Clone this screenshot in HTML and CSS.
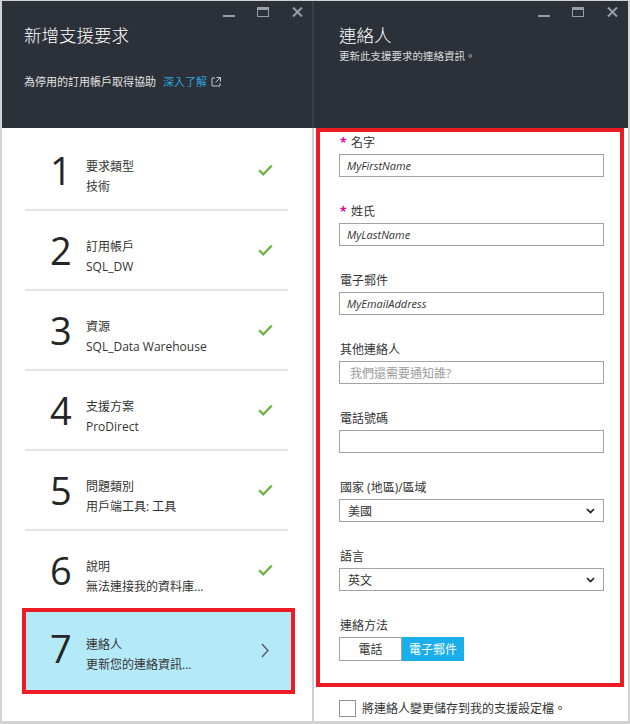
FILE: index.html
```html
<!DOCTYPE html>
<html lang="zh-Hant">
<head>
<meta charset="utf-8">
<title>新增支援要求</title>
<link rel="stylesheet" href="styles.css">
</head>
<body>
<div class="portal">
  <section class="blade blade-steps">
    <header class="blade-header">
      <div class="win-controls">
        <span class="ctl-min"></span>
        <span class="ctl-max"></span>
        <svg class="ctl-close" width="11" height="10" viewBox="0 0 11 10"><path d="M1 0.5L10 9.5M10 0.5L1 9.5" stroke="#9a9ea4" stroke-width="2" fill="none"/></svg>
      </div>
      <h1 class="blade-title">新增支援要求</h1>
      <p class="blade-note">為停用的訂用帳戶取得協助<a class="link">深入了解</a><svg class="ext" width="10" height="10" viewBox="0 0 10 10"><path d="M4 1H1v8h8V6" stroke="#c4c7cc" stroke-width="1" fill="none"/><path d="M5.5 0.5h4v4M9.5 0.5L4.5 5.5" stroke="#c4c7cc" stroke-width="1" fill="none"/></svg></p>
    </header>
    <ol class="steps">
      <li class="step">
        <span class="step-num">1</span>
        <div class="step-text"><div>要求類型</div><div>技術</div></div>
        <svg class="check" width="15" height="12" viewBox="0 0 15 12"><polyline points="1.2,6.2 5.3,10.3 13.8,1.5" fill="none" stroke="#6cb33f" stroke-width="2.3"/></svg>
      </li>
      <li class="step">
        <span class="step-num">2</span>
        <div class="step-text"><div>訂用帳戶</div><div>SQL_DW</div></div>
        <svg class="check" width="15" height="12" viewBox="0 0 15 12"><polyline points="1.2,6.2 5.3,10.3 13.8,1.5" fill="none" stroke="#6cb33f" stroke-width="2.3"/></svg>
      </li>
      <li class="step">
        <span class="step-num">3</span>
        <div class="step-text"><div>資源</div><div>SQL_Data Warehouse</div></div>
        <svg class="check" width="15" height="12" viewBox="0 0 15 12"><polyline points="1.2,6.2 5.3,10.3 13.8,1.5" fill="none" stroke="#6cb33f" stroke-width="2.3"/></svg>
      </li>
      <li class="step">
        <span class="step-num">4</span>
        <div class="step-text"><div>支援方案</div><div>ProDirect</div></div>
        <svg class="check" width="15" height="12" viewBox="0 0 15 12"><polyline points="1.2,6.2 5.3,10.3 13.8,1.5" fill="none" stroke="#6cb33f" stroke-width="2.3"/></svg>
      </li>
      <li class="step">
        <span class="step-num">5</span>
        <div class="step-text"><div>問題類別</div><div>用戶端工具: 工具</div></div>
        <svg class="check" width="15" height="12" viewBox="0 0 15 12"><polyline points="1.2,6.2 5.3,10.3 13.8,1.5" fill="none" stroke="#6cb33f" stroke-width="2.3"/></svg>
      </li>
      <li class="step step-before-active">
        <span class="step-num">6</span>
        <div class="step-text"><div>說明</div><div>無法連接我的資料庫...</div></div>
        <svg class="check" width="15" height="12" viewBox="0 0 15 12"><polyline points="1.2,6.2 5.3,10.3 13.8,1.5" fill="none" stroke="#6cb33f" stroke-width="2.3"/></svg>
      </li>
      <li class="step step-active">
        <span class="step-num">7</span>
        <div class="step-text"><div>連絡人</div><div>更新您的連絡資訊...</div></div>
        <svg class="chev" width="8" height="15" viewBox="0 0 8 15"><polyline points="1,1 7,7.5 1,14" fill="none" stroke="#555" stroke-width="1.3"/></svg>
      </li>
    </ol>
  </section>

  <section class="blade blade-form">
    <header class="blade-header">
      <div class="win-controls">
        <span class="ctl-min"></span>
        <span class="ctl-max"></span>
        <svg class="ctl-close" width="11" height="10" viewBox="0 0 11 10"><path d="M1 0.5L10 9.5M10 0.5L1 9.5" stroke="#9a9ea4" stroke-width="2" fill="none"/></svg>
      </div>
      <h1 class="blade-title">連絡人</h1>
      <p class="blade-sub">更新此支援要求的連絡資訊。</p>
    </header>
    <div class="form-area">
      <div class="field">
        <div class="field-label"><span class="req">*</span>名字</div>
        <div class="field-box"><span class="val">MyFirstName</span></div>
      </div>
      <div class="field">
        <div class="field-label"><span class="req">*</span>姓氏</div>
        <div class="field-box"><span class="val">MyLastName</span></div>
      </div>
      <div class="field">
        <div class="field-label">電子郵件</div>
        <div class="field-box"><span class="val">MyEmailAddress</span></div>
      </div>
      <div class="field">
        <div class="field-label">其他連絡人</div>
        <div class="field-box"><span class="placeholder">我們還需要通知誰?</span></div>
      </div>
      <div class="field">
        <div class="field-label">電話號碼</div>
        <div class="field-box"></div>
      </div>
      <div class="field">
        <div class="field-label">國家 (地區)/區域</div>
        <div class="field-box select"><span class="sel-val">美國</span><svg width="9" height="6" viewBox="0 0 9 6"><polyline points="1,1 4.5,4.6 8,1" fill="none" stroke="#222" stroke-width="1.7"/></svg></div>
      </div>
      <div class="field">
        <div class="field-label">語言</div>
        <div class="field-box select"><span class="sel-val">英文</span><svg width="9" height="6" viewBox="0 0 9 6"><polyline points="1,1 4.5,4.6 8,1" fill="none" stroke="#222" stroke-width="1.7"/></svg></div>
      </div>
      <div class="field">
        <div class="field-label">連絡方法</div>
        <div class="seg">
          <span class="seg-btn">電話</span>
          <span class="seg-btn on">電子郵件</span>
        </div>
      </div>
    </div>
    <div class="save-row">
      <span class="checkbox"></span>
      <span class="save-text">將連絡人變更儲存到我的支援設定檔。</span>
    </div>
  </section>
</div>
</body>
</html>
```

FILE: styles.css
```css
html, body {
  margin: 0;
  padding: 0;
  width: 630px;
  height: 724px;
  overflow: hidden;
  background: #fff;
}

.portal {
  display: flex;
  height: 724px;
  box-sizing: border-box;
  border: 2px solid #d3d3d3;
  border-top-width: 1px;
  border-bottom-width: 3px;
  background: #fff;
  font-family: "Open Sans", "Noto Sans CJK TC", sans-serif;
  color: #333;
}

.blade {
  display: flex;
  flex-direction: column;
}

.blade-steps {
  width: 312px;
  flex: none;
}

.blade-form {
  flex: 1;
  min-width: 0;
}

.blade-header {
  height: 127px;
  flex: none;
  box-sizing: border-box;
  background: #2c3038;
  color: #fff;
  padding: 6px 10px 0 25px;
}

.blade-steps .blade-header {
  border-right: 2px solid #3b4048;
  padding: 6px 9px 0 22px;
}

.win-controls {
  display: flex;
  justify-content: flex-end;
  align-items: flex-end;
  gap: 22px;
  height: 10px;
}

.ctl-min {
  width: 12px;
  height: 2px;
  background: #9a9ea4;
}

.ctl-max {
  width: 12px;
  height: 10px;
  box-sizing: border-box;
  border: 1.5px solid #9a9ea4;
  border-top-width: 3px;
}

.ctl-close {
  display: block;
  margin-left: 1px;
}

.blade-title {
  margin: 6px 0 0;
  font-size: 17.5px;
  line-height: 24px;
  font-weight: 300;
  color: #fff;
}

.blade-note {
  margin: 27px 0 0;
  font-size: 11px;
  line-height: 16px;
  color: #e4e4e4;
  display: flex;
  align-items: center;
}

.link {
  color: #2ba0d8;
  margin-left: 7px;
}

.ext {
  margin-left: 4px;
}

.blade-sub {
  margin: 2px 0 0;
  font-size: 10.5px;
  line-height: 14px;
  color: #dcdcdc;
}

.steps {
  list-style: none;
  margin: 0;
  padding: 3px 0 0;
  flex: 1;
  border-right: 2px solid #d0d0d0;
  background: #fff;
}

.step {
  display: flex;
  align-items: flex-start;
  box-sizing: border-box;
  height: 80px;
  margin: 0 24px 0 23px;
  padding: 19px 15px 0 25px;
  border-bottom: 2px solid #e3e3e3;
}

.step-before-active {
  height: 78px;
  border-bottom: none;
}

.step-num {
  width: 36px;
  flex: none;
  font-size: 38px;
  line-height: 40px;
  color: #262626;
}

.step-text {
  flex: 1;
  margin-top: 7px;
  font-size: 12px;
  line-height: 20px;
  color: #333;
  white-space: nowrap;
}

.check {
  flex: none;
  margin-top: 14px;
}

.step-active {
  height: 86px;
  margin: -1px 17px 0 20px;
  border: 4px solid #ec1c24;
  background: #b4e9f8;
  padding: 16px 22px 0 24px;
}

.chev {
  flex: none;
  margin-top: 15px;
}

.form-area {
  flex: none;
  height: 559px;
  box-sizing: border-box;
  margin: 0 4px 0 2px;
  border: 4px solid #ec1c24;
  padding: 1px 16px 0 19px;
}

.field {
  margin-bottom: 25px;
}

.field-label {
  font-size: 12px;
  line-height: 20px;
  color: #333;
  padding-left: 1px;
  white-space: nowrap;
}

.req {
  display: inline-block;
  width: 11px;
  color: #e3008c;
  font-weight: 700;
}

.field-box {
  margin-top: 1px;
  height: 23px;
  box-sizing: border-box;
  border: 1px solid #a3a3a3;
  padding: 0 8px 0 7px;
  display: flex;
  align-items: center;
  justify-content: space-between;
  background: #fff;
}

.val {
  font-size: 11px;
  font-style: italic;
  color: #333;
}

.placeholder {
  font-size: 12px;
  color: #9a9a9a;
  padding-left: 3px;
}

.sel-val {
  font-size: 12px;
  color: #333;
  padding-left: 1px;
}

.select svg {
  display: block;
}

.seg {
  display: flex;
  margin-top: 1px;
}

.seg-btn {
  width: 63px;
  height: 24px;
  box-sizing: border-box;
  border: 1px solid #a3a3a3;
  display: flex;
  align-items: center;
  justify-content: center;
  font-size: 12px;
  color: #333;
  background: #fff;
}

.seg-btn.on {
  width: 62px;
  background: #1aaeea;
  border-color: #1aaeea;
  color: #fff;
}

.save-row {
  display: flex;
  align-items: center;
  padding: 13px 0 0 25px;
}

.checkbox {
  width: 17px;
  height: 17px;
  box-sizing: border-box;
  border: 1px solid #8f8f8f;
  background: #fff;
  flex: none;
}

.save-text {
  margin-left: 6px;
  font-size: 12px;
  line-height: 17px;
  color: #333;
  white-space: nowrap;
}
```
